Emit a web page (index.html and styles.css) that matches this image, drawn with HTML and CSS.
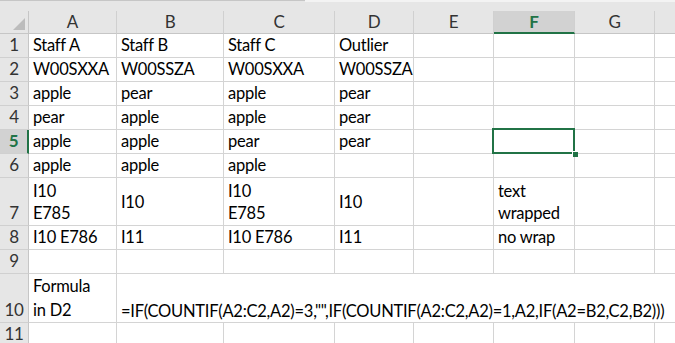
FILE: index.html
```html
<!DOCTYPE html>
<html lang="en">

<head>
    <meta charset="UTF-8">
    <title>Staff comparison</title>
    <link rel="stylesheet" href="styles.css">
</head>

<body>
    <div class="topbar"><div class="formula-edge"></div></div>

    <div class="sheet">
        <!-- column headers -->
        <div class="corner"><span class="corner-tri"></span></div>
        <div class="col-head">A</div>
        <div class="col-head">B</div>
        <div class="col-head">C</div>
        <div class="col-head">D</div>
        <div class="col-head">E</div>
        <div class="col-head active">F</div>
        <div class="col-head">G</div>
        <div class="col-head"></div>

        <!-- row 1 -->
        <div class="row-head">1</div>
        <div class="cell">Staff A</div>
        <div class="cell">Staff B</div>
        <div class="cell">Staff C</div>
        <div class="cell">Outlier</div>
        <div class="cell"></div>
        <div class="cell"></div>
        <div class="cell"></div>
        <div class="cell"></div>

        <!-- row 2 -->
        <div class="row-head">2</div>
        <div class="cell">W00SXXA</div>
        <div class="cell">W00SSZA</div>
        <div class="cell">W00SXXA</div>
        <div class="cell">W00SSZA</div>
        <div class="cell"></div>
        <div class="cell"></div>
        <div class="cell"></div>
        <div class="cell"></div>

        <!-- row 3 -->
        <div class="row-head">3</div>
        <div class="cell">apple</div>
        <div class="cell">pear</div>
        <div class="cell">apple</div>
        <div class="cell">pear</div>
        <div class="cell"></div>
        <div class="cell"></div>
        <div class="cell"></div>
        <div class="cell"></div>

        <!-- row 4 -->
        <div class="row-head">4</div>
        <div class="cell">pear</div>
        <div class="cell">apple</div>
        <div class="cell">apple</div>
        <div class="cell">pear</div>
        <div class="cell"></div>
        <div class="cell"></div>
        <div class="cell"></div>
        <div class="cell"></div>

        <!-- row 5 -->
        <div class="row-head active">5</div>
        <div class="cell">apple</div>
        <div class="cell">apple</div>
        <div class="cell">pear</div>
        <div class="cell">pear</div>
        <div class="cell"></div>
        <div class="cell selected"></div>
        <div class="cell"></div>
        <div class="cell"></div>

        <!-- row 6 -->
        <div class="row-head">6</div>
        <div class="cell">apple</div>
        <div class="cell">apple</div>
        <div class="cell">apple</div>
        <div class="cell"></div>
        <div class="cell"></div>
        <div class="cell"></div>
        <div class="cell"></div>
        <div class="cell"></div>

        <!-- row 7 (wrapped text) -->
        <div class="row-head">7</div>
        <div class="cell wrap">I10<br>E785</div>
        <div class="cell middle">I10</div>
        <div class="cell wrap">I10<br>E785</div>
        <div class="cell middle">I10</div>
        <div class="cell"></div>
        <div class="cell wrap">text<br>wrapped</div>
        <div class="cell"></div>
        <div class="cell"></div>

        <!-- row 8 -->
        <div class="row-head">8</div>
        <div class="cell">I10 E786</div>
        <div class="cell">I11</div>
        <div class="cell">I10 E786</div>
        <div class="cell">I11</div>
        <div class="cell"></div>
        <div class="cell">no wrap</div>
        <div class="cell"></div>
        <div class="cell"></div>

        <!-- row 9 -->
        <div class="row-head">9</div>
        <div class="cell"></div>
        <div class="cell"></div>
        <div class="cell"></div>
        <div class="cell"></div>
        <div class="cell"></div>
        <div class="cell"></div>
        <div class="cell"></div>
        <div class="cell"></div>

        <!-- row 10: formula spills over the empty cells -->
        <div class="row-head">10</div>
        <div class="cell tall">Formula<br>in D2</div>
        <div class="cell spill">=IF(COUNTIF(A2:C2,A2)=3,"",IF(COUNTIF(A2:C2,A2)=1,A2,IF(A2=B2,C2,B2)))</div>

        <!-- row 11 -->
        <div class="row-head">11</div>
        <div class="cell"></div>
        <div class="cell"></div>
        <div class="cell"></div>
        <div class="cell"></div>
        <div class="cell"></div>
        <div class="cell"></div>
        <div class="cell"></div>
        <div class="cell"></div>
    </div>
</body>

</html>
```

FILE: styles.css
```css
body {
    margin: 0;
    background: #e6e6e6;
    font-family: Lato, "Liberation Sans", sans-serif;
    font-size: 16.5px;
    letter-spacing: -0.25px;
    color: #000;
    overflow: hidden;
}

.topbar {
    height: 11px;
    border-top: 1px solid #c6c6c6;
    box-sizing: border-box;
    position: relative;
}

.formula-edge {
    position: absolute;
    left: 305px;
    right: 0;
    top: -1px;
    height: 2px;
    background: #f3f3f3;
}

.sheet {
    display: grid;
    grid-template-columns: 29px 88px 107px 111px 79px 80px 81px 80px 80px;
    grid-template-rows: 23px repeat(6, 24px) 48px 24px 24px 49px 24px;
    width: 735px;
    background: #fff;
}

.corner {
    background: #e6e6e6;
    border-right: 1px solid #c6c6c6;
    border-bottom: 1px solid #c6c6c6;
    box-sizing: border-box;
    position: relative;
}

.corner-tri {
    position: absolute;
    right: 3px;
    bottom: 3px;
    width: 0;
    height: 0;
    border-left: 12px solid transparent;
    border-bottom: 12px solid #bcbcbc;
}

.col-head {
    background: #e6e6e6;
    color: #333;
    font-size: 17px;
    text-align: center;
    line-height: 22px;
    border-right: 1px solid #d0d0d0;
    border-bottom: 1px solid #c6c6c6;
    box-sizing: border-box;
}

.col-head.active {
    background: #d2d2d2;
    color: #217346;
    font-weight: bold;
    border-bottom: 2px solid #217346;
}

.row-head {
    background: #e6e6e6;
    color: #333;
    font-size: 17px;
    display: flex;
    align-items: flex-end;
    justify-content: center;
    padding-bottom: 1px;
    line-height: 22px;
    border-right: 1px solid #c6c6c6;
    border-bottom: 1px solid #d0d0d0;
    box-sizing: border-box;
}

.row-head.active {
    background: #d2d2d2;
    color: #217346;
    font-weight: bold;
    border-right: 2px solid #217346;
}

.cell {
    display: flex;
    align-items: flex-end;
    padding: 0 3px 1px 4px;
    line-height: 22px;
    white-space: nowrap;
    border-right: 1px solid #d4d4d4;
    border-bottom: 1px solid #d4d4d4;
    box-sizing: border-box;
    position: relative;
}

.cell.wrap,
.cell.middle {
    align-items: center;
    padding-bottom: 0;
}

.cell.tall {
    line-height: 24px;
    padding-bottom: 0;
}

.cell.spill {
    grid-column: span 7;
    border-right: none;
    padding-bottom: 0;
}

.cell.selected::after {
    content: "";
    position: absolute;
    left: -2px;
    top: -2px;
    right: -1px;
    bottom: -1px;
    border: 2px solid #217346;
    pointer-events: none;
}

.cell.selected::before {
    content: "";
    position: absolute;
    right: -4px;
    bottom: -4px;
    width: 5px;
    height: 5px;
    background: #217346;
    border-left: 1px solid #fff;
    border-top: 1px solid #fff;
    z-index: 1;
}
```
